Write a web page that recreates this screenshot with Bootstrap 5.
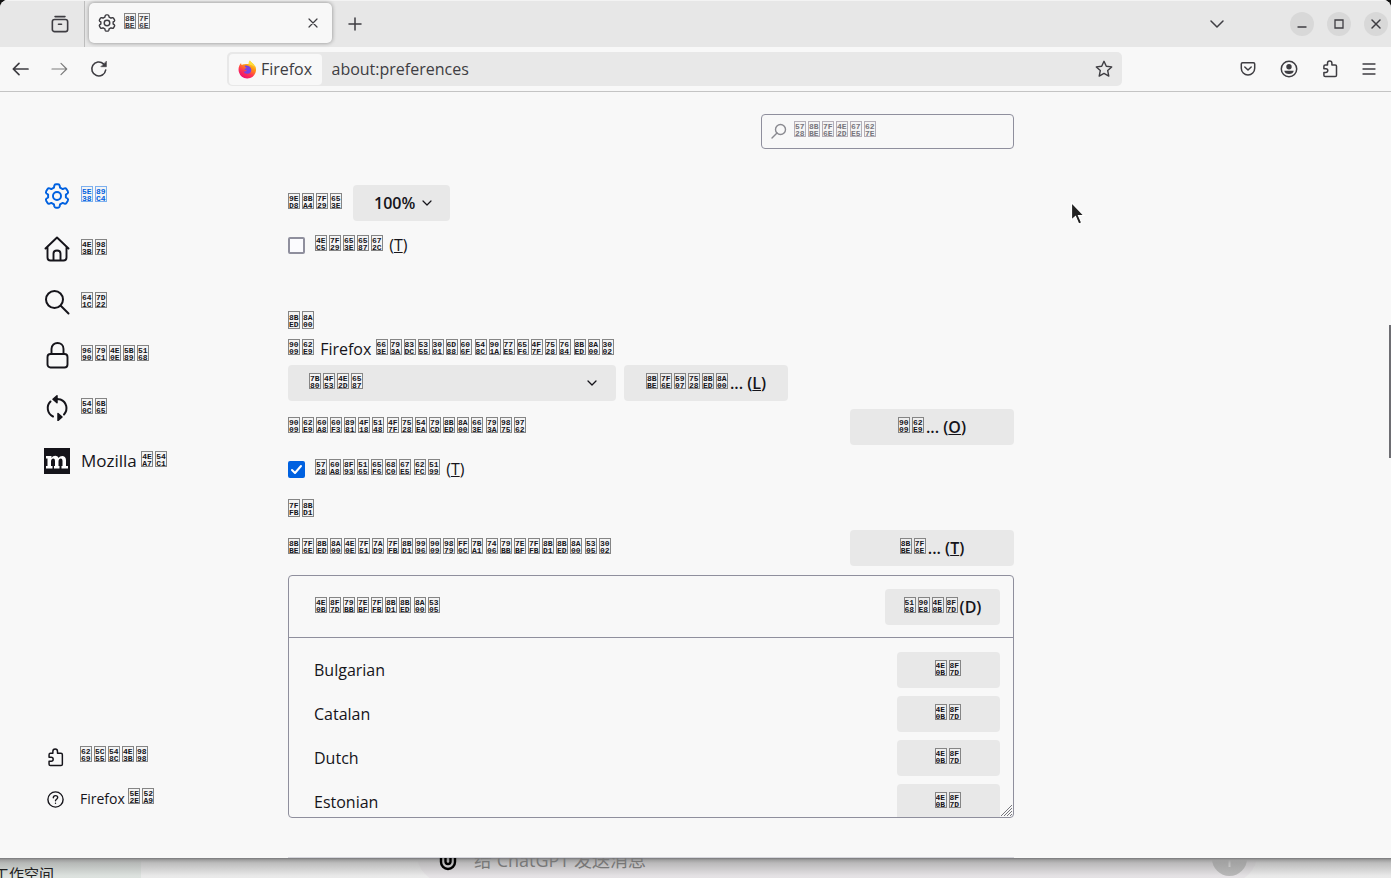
<!DOCTYPE html>
<html lang="zh-CN">
<head>
<meta charset="utf-8">
<meta name="viewport" content="width=device-width, initial-scale=1">
<title>about:preferences</title>
<link href="https://cdn.jsdelivr.net/npm/bootstrap@5.3.0/dist/css/bootstrap.min.css" rel="stylesheet">
<style>
  :root { --ink:#15141a; --chrome:#e7e7e7; --paper:#f8f8f8; --line:#8f8f9d; --accent:#0061e0; }
  body { font-family:"Open Sans","Noto Sans","Noto Sans CJK SC",sans-serif; font-size:16px; line-height:24px; color:var(--ink); background:#111; overflow:hidden; }
  svg { display:block; flex:none; }
  .ico { fill:none; stroke:currentColor; stroke-linecap:round; stroke-linejoin:round; }

  /* code point boxes */
  .hex { white-space:nowrap; }
  .cell { display:inline-block; overflow:hidden; width:12px; height:16px; margin-right:2px; padding:1px 0 0 0; border:1px solid #858585; background:#f4f4f4;
          font:bold 8px/7px "Liberation Mono",monospace; word-break:break-all; white-space:normal; text-align:left; color:inherit; }
  .cell:nth-child(7n) { margin-right:3px; }
  .blue .cell { border-color:#7db0ef; }
  .faint .cell { border-color:#b5afb8; color:#77757c; }

  .window { background:var(--paper); border-radius:8px 8px 0 0; overflow:hidden; }
  .plain { border:0; background:none; padding:0; color:#3e3d42; display:flex; align-items:center; justify-content:center; }

  .tabstrip { height:47px; background:var(--chrome); border-top:1px solid #f3f3f3; padding-right:3px; }
  .pinned { width:85px; border-right:1px solid #bdbdbd; padding-left:35px; }
  .active-tab { width:243px; height:40px; margin:0 0 2px 4px; padding:0 13px 0 9px; color:#3e3d42; background:var(--paper); border-radius:5px; box-shadow:0 0 4px rgba(0,0,0,.4); }
  .round-btn { width:24px; height:24px; border-radius:50%; background:#d8d8d8; }
  .win-btns { gap:13px; padding-left:17px; }

  .toolbar { height:45px; border-bottom:1px solid #c4c4c4; padding:0 15px 0 12px; }
  .nav-btns { gap:22px; }
  .urlbar { width:895px; height:34px; background:#e8e8e8; border-radius:5px; padding:2px 9px 2px 2px; }
  .identity { width:93px; height:31px; background:var(--paper); border-radius:4px; color:#3e3d42; }
  .urlbar input { border:0; background:none; outline:0; color:#3e3d42; padding:0 10px; min-width:0; }

  .side { width:288px; padding:77px 0 38px 44px; }
  .side a { color:var(--ink); text-decoration:none; display:flex; align-items:center; }
  .side .cat { height:53px; gap:11px; font-size:17px; }
  .side .cat.blue { color:var(--accent); }
  .side .foot { height:42px; gap:16px; font-size:14px; padding-left:3px; }

  .prefs { max-width:726px; padding-top:22px; }
  .find { width:253px; height:35px; }
  .find input { height:35px; border:1px solid var(--line); border-radius:4px; background:var(--paper); padding-left:32px; }
  .find label { left:10px; top:0; height:34px; gap:7px; color:#8a8a90; }
  .zoom-row { margin-top:36px; }
  .zoom-row label { margin-right:9px; }
  .soft { height:36px; border:0; border-radius:4px; background:#e8e8e8; color:var(--ink); font-weight:600; padding:0 17px; white-space:nowrap; }
  .soft .cell { background:#eeeeee; }
  select.soft { appearance:none; width:100%; }
  #zoom { padding:0 34px 0 21px; }
  .wide { width:164px; padding:0; }
  .get-all { width:115px; padding:0; }
  .tick { appearance:none; width:17px; height:17px; margin:0 10px 0 0; border:2px solid var(--line); border-radius:2px; background:#fbfbfe; flex:none; }
  .tick:checked { border-color:var(--accent); background:var(--accent) url("data:image/svg+xml,%3Csvg xmlns='http://www.w3.org/2000/svg' viewBox='0 0 13 13'%3E%3Cpath d='M2 7l3 3 6-7' fill='none' stroke='white' stroke-width='2' stroke-linecap='round' stroke-linejoin='round'/%3E%3C/svg%3E") center/13px no-repeat; }
  .lang-select { width:328px; }
  .lang-select label { padding-left:21px; }
  .over { pointer-events:none; }
  h2 { font-size:16px; line-height:24px; margin:0; }
  h2 .cell { height:18px; padding-top:2px; }
  .lang-head { margin-top:54px; }
  .trans-head { margin-top:18px; }
  .intro { margin-top:2px; }
  .snug { margin-top:7px; }

  .langs { height:243px; margin-top:9px; border:1px solid var(--line); border-radius:4px; overflow:hidden; }
  .langs .top { height:62px; padding:0 13px 0 26px; border-bottom:1px solid var(--line); }
  .langs td { height:44px; padding:4px 13px 4px 25px; }
  .langs td:last-child { text-align:right; }
  .langs .get { width:103px; }
  .langs table { width:100%; margin-top:10px; }
  .grip { right:0; bottom:0; }
  .next-rule { height:1px; background:#d6d6dc; margin-top:39px; }
  .thumb { right:0; top:233px; width:2px; height:133px; background:#6e6e73; }
  .pointer { left:1070px; top:109px; }

  .desk { height:20px; background:#ececec; overflow:hidden; }
  .desk .shade { inset:0; background:linear-gradient(#77777a 0,#a0a0a0 2px,rgba(150,150,150,.55) 5px,rgba(215,215,215,.1) 18px); }
  .desk .panel { left:0; top:0; width:141px; height:20px; background:#dde3df; }
  .desk .chatbar { left:417px; right:134px; top:-30px; height:54px; border-radius:27px; background:#e6e3e6; }
  .desk .work { left:-6px; top:4px; font-size:15px; color:#222; white-space:nowrap; }
  .desk .ask { left:474px; top:-10px; font-size:18px; color:#777; white-space:nowrap; }
  .desk .clip { left:439px; top:-7px; color:#000; }
  .desk .send { left:1212px; top:-17px; }
</style>
</head>
<body class="vh-100 d-flex flex-column">
<div class="window flex-grow-1 d-flex flex-column">
  <header>
    <div class="tabstrip d-flex align-items-center">
      <div class="pinned h-100 d-flex align-items-center justify-content-center">
        <button class="plain" aria-label="Firefox View"><svg class="ico" width="18" height="18" viewBox="0 0 20 20" stroke-width="1.8"><path d="M4.500 1.800h11"/><rect x="1.500" y="5" width="17" height="13.500" rx="2.500"/><path d="M8.300 10.300h3.400"/></svg></button>
      </div>
      <div class="active-tab d-flex align-items-center">
        <svg class="ico me-2" width="18" height="20" viewBox="0 0 24 24" stroke-width="1.900"><use href="#gear"/></svg>
        <span class="hex">8BBE 7F6E</span>
        <button class="plain ms-auto" aria-label="Close tab"><svg class="ico" width="12" height="12" viewBox="0 0 12 12" stroke-width="1.200"><path d="M2 2l8 8M10 2l-8 8"/></svg></button>
      </div>
      <button class="plain ms-3" aria-label="New tab"><svg class="ico" width="14" height="14" viewBox="0 0 14 14" stroke-width="1.500"><path d="M7 1v12M1 7h12"/></svg></button>
      <div class="ms-auto d-flex align-items-center">
        <button class="plain me-5" aria-label="List tabs"><svg class="ico" width="16" height="10" viewBox="0 0 16 10" stroke-width="1.500"><path d="M2 2l6 6 6-6"/></svg></button>
        <div class="win-btns d-flex">
          <button class="plain round-btn" aria-label="Minimize"><svg class="ico" width="12" height="12" viewBox="0 0 12 12" stroke-width="1.400"><path d="M2 9h8"/></svg></button>
          <button class="plain round-btn" aria-label="Maximize"><svg width="12" height="12" viewBox="0 0 12 12" fill="none" stroke="currentColor" stroke-width="1.300"><path d="M2 2h8v8H2z"/></svg></button>
          <button class="plain round-btn" aria-label="Close"><svg class="ico" width="12" height="12" viewBox="0 0 12 12" stroke-width="1.500"><path d="M2 2l8 8M10 2l-8 8"/></svg></button>
        </div>
      </div>
    </div>
    <div class="toolbar d-flex align-items-center justify-content-between">
      <div class="nav-btns d-flex align-items-center">
        <button class="plain" aria-label="Back"><svg class="ico" width="17" height="16" viewBox="0 0 17 16" stroke-width="1.700"><path d="M16 8H1.500M7 2.300L1.300 8 7 13.700"/></svg></button>
        <button class="plain text-black-50" aria-label="Forward"><svg class="ico" width="17" height="16" viewBox="0 0 17 16" stroke-width="1.200"><path d="M1 8h14.500M10 2.300L15.700 8 10 13.700"/></svg></button>
        <button class="plain" aria-label="Reload"><svg class="ico" width="18" height="18" viewBox="0 0 18 18" stroke-width="1.600"><path d="M15.700 10A7 7 0 1 1 13.500 3.800L15 5"/><path d="M16.400 1.500v5.200h-5.200z" fill="currentColor" stroke-width=".6"/></svg></button>
      </div>
      <div class="urlbar d-flex align-items-center">
        <div class="identity d-flex align-items-center justify-content-center gap-1">
          <svg width="19" height="19" viewBox="0 0 20 20"><defs><linearGradient id="fx" x1=".8" y1="0" x2=".25" y2="1"><stop offset="0" stop-color="#fff44f"/><stop offset=".35" stop-color="#ff980e"/><stop offset=".65" stop-color="#ff3750"/><stop offset="1" stop-color="#eb0878"/></linearGradient></defs><path d="M12.500.5c1 2 4 3 5.500 6 .8.300 1.600 4 .4 7A9.200 9.200 0 0 1 1 13C0 9.500.8 6 3.200 3.200c0 1 .3 1.600.8 2C5 4.500 6 4.300 7.300 4.500 8.500 4 11 4 11.500 4.600 11 3 11.500 1.500 12.500.5z" fill="url(#fx)"/><path d="M7 6c2.500-1 6.500.500 7 4a4.300 4.300 0 0 1-8.300 1.800c1.400.8 2.900.3 3.900-.4-.6-.7-2.400-.6-2.900-1.700.6-.8 1.800-.7 2.500-1.200C8.200 7.600 7 7 7 6z" fill="#7542e5"/><path d="M12.500.5c1 2 4 3 5 6.500-1.500-1.700-3.500-1-6-2.400C11 3 11.500 1.500 12.500.5z" fill="#ffde3a"/></svg>
          <span>Firefox</span>
        </div>
        <input class="flex-grow-1" type="text" aria-label="Address" value="about:preferences">
        <button class="plain" aria-label="Bookmark"><svg class="ico" width="18" height="18" viewBox="0 0 18 18" stroke-width="1.400"><path d="M9 1.300l2.300 5 5.400.6-4 3.700 1.100 5.500L9 13.400l-4.800 2.700 1.100-5.500-4-3.700 5.400-.6z"/></svg></button>
      </div>
      <div class="d-flex align-items-center gap-4">
        <button class="plain" aria-label="Pocket"><svg class="ico" width="16" height="16" viewBox="0 0 16 16" stroke-width="1.500"><path d="M2.500 1.700h11c.6 0 1.200.5 1.200 1.200v4.300a6.700 6.700 0 0 1-13.400 0V2.900c0-.7.6-1.200 1.200-1.200zM4.800 6L8 9l3.200-3"/></svg></button>
        <button class="plain" aria-label="Account"><svg width="18" height="18" viewBox="0 0 18 18"><circle cx="9" cy="9" r="7.700" fill="none" stroke="currentColor" stroke-width="1.500"/><circle cx="9" cy="6.700" r="2.700" fill="currentColor"/><path d="M4.300 10.700h9.400c0 2-2.200 3.300-4.700 3.300s-4.700-1.300-4.700-3.300z" fill="currentColor"/></svg></button>
        <button class="plain" aria-label="Extensions"><svg class="ico" width="16" height="18" viewBox="0 0 16 18" stroke-width="1.500"><use href="#puzzle"/></svg></button>
        <button class="plain" aria-label="Menu"><svg class="ico" width="14" height="14" viewBox="0 0 14 14" stroke-width="1.300"><path d="M1 2h12M1 7h12M1 12h12"/></svg></button>
      </div>
    </div>
  </header>

  <div class="d-flex flex-grow-1 position-relative">
    <nav class="side d-flex flex-column justify-content-between flex-shrink-0">
      <div>
        <a class="cat blue" href="#general"><svg class="ico" width="26" height="26" viewBox="0 0 24 24" stroke-width="1.800"><use href="#gear"/></svg><span class="hex">5E38 89C4</span></a>
        <a class="cat" href="#home"><svg class="ico" width="26" height="26" viewBox="0 0 26 26" stroke-width="1.900"><path d="M1.500 12.500L13 1.500l11.500 11M3.500 11v10.500c0 1.500 1 3 3 3h13c2 0 3-1.500 3-3V11M9.500 24v-6.500c0-2 1.500-3 3.500-3s3.500 1 3.500 3V24"/></svg><span class="hex">4E3B 9875</span></a>
        <a class="cat" href="#search"><svg class="ico" width="26" height="26" viewBox="0 0 26 26" stroke-width="2"><circle cx="10.500" cy="10.500" r="8.500"/><path d="M17 17l7.500 7.500"/></svg><span class="hex">641C 7D22</span></a>
        <a class="cat" href="#privacy"><svg class="ico" width="26" height="28" viewBox="0 0 26 28" stroke-width="1.900"><rect x="3.500" y="13" width="20" height="13.500" rx="3"/><path d="M7.500 13V8c0-8 12-8 12 0v5"/></svg><span class="hex">9690 79C1 4E0E 5B89 5168</span></a>
        <a class="cat" href="#sync"><svg class="ico" width="26" height="26" viewBox="0 0 26 26" stroke-width="2"><path d="M6.500 6.500a9.300 9.300 0 0 0 2.500 15M20 19.500a9.300 9.300 0 0 0-3.500-15L13 4"/><path d="M13 .8v7L9 4.300zM14 18.500v7l4-3.500z" fill="currentColor" stroke-width="1.500"/></svg><span class="hex">540C 6B65</span></a>
        <a class="cat" href="#mozilla"><svg width="26" height="26" viewBox="0 0 26 26"><path d="M0 0h26v26H0z" fill="#15141a"/><path d="M2 8h5.500v2C9 7.300 13.300 7 14.600 10 16 7 22 6.800 22 12v6h2v2.500h-6.500V18h1v-5c0-4-4-3-4 .5V18h1v2.500H10V18h1v-5c0-4-4-3-4 .5V18h1.500v2.500H2V18h1.500v-7.500H2z" fill="#fff"/></svg><span>Mozilla <span class="hex">4EA7 54C1</span></span></a>
      </div>
      <div>
        <a class="foot" href="#addons"><svg class="ico" width="17" height="19" viewBox="0 0 16 18" stroke-width="1.400"><use href="#puzzle"/></svg><span class="hex">6269 5C55 548C 4E3B 9898</span></a>
        <a class="foot" href="#help"><svg class="ico" width="17" height="17" viewBox="0 0 17 17" stroke-width="1.400"><circle cx="8.500" cy="8.500" r="7.600"/><path d="M6.300 6.800c0-3 4.400-2.800 4.400-.2 0 1.600-2.200 1.600-2.200 3.200M8.500 12.200v.1"/></svg><span>Firefox <span class="hex">5E2E 52A9</span></span></a>
      </div>
    </nav>

    <main class="prefs flex-grow-1">
      <div class="find ms-auto position-relative">
        <input id="find" class="w-100" type="text">
        <label for="find" class="position-absolute d-flex align-items-center faint"><svg class="ico" width="16" height="16" viewBox="0 0 16 16" stroke-width="1.400"><circle cx="9.500" cy="6.500" r="5"/><path d="M6 10l-5 5"/></svg><span class="hex">5728 8BBE 7F6E 4E2D 67E5 627E</span></label>
      </div>
      <div class="zoom-row d-flex align-items-center">
        <label for="zoom" class="hex">9ED8 8BA4 7F29 653E</label>
        <div class="position-relative">
          <select id="zoom" class="soft"><option>100%</option></select>
          <svg class="ico over position-absolute top-50 end-0 translate-middle-y me-3" width="14" height="8" viewBox="0 0 14 8" stroke-width="1.200"><path d="M3 2l4 4 4-4"/></svg>
        </div>
      </div>
      <div class="d-flex align-items-center mt-2 pt-1"><input class="tick" type="checkbox" id="textonly"><label for="textonly"><span class="hex">4EC5 7F29 653E 6587 672C</span> (<u>T</u>)</label></div>

      <h2 class="lang-head"><span class="hex">8BED 8A00</span></h2>
      <div class="intro"><span class="hex">9009 62E9</span> Firefox <span class="hex">663E 793A 83DC 5355 3001 6D88 606F 548C 901A 77E5 65F6 4F7F 7528 7684 8BED 8A00 3002</span></div>
      <div class="d-flex mt-1 gap-2">
        <div class="lang-select position-relative">
          <select id="lang" class="soft"><option></option></select>
          <label for="lang" class="over hex position-absolute top-50 start-0 translate-middle-y">7B80 4F53 4E2D 6587</label>
          <svg class="ico over position-absolute top-50 end-0 translate-middle-y me-3" width="16" height="8" viewBox="0 0 16 8" stroke-width="1.300"><path d="M4 2l4 4 4-4"/></svg>
        </div>
        <button class="soft wide"><span class="hex">8BBE 7F6E 5907 7528 8BED 8A00</span>... (<u>L</u>)</button>
      </div>
      <div class="d-flex align-items-center justify-content-between mt-2"><span class="hex">9009 62E9 60A8 60F3 8981 4F18 5148 4F7F 7528 54EA 79CD 8BED 8A00 663E 793A 9875 9762</span><button class="soft wide"><span class="hex">9009 62E9</span>... (<u>O</u>)</button></div>
      <div class="d-flex align-items-center mt-2 pt-1"><input class="tick" type="checkbox" id="spell" checked><label for="spell"><span class="hex">5728 60A8 8F93 5165 65F6 68C0 67E5 62FC 5199</span> (<u>T</u>)</label></div>
      <h2 class="trans-head"><span class="hex">7FFB 8BD1</span></h2>
      <div class="snug d-flex align-items-center justify-content-between"><span class="hex">8BBE 7F6E 8BED 8A00 4E0E 7F51 7AD9 7FFB 8BD1 9996 9009 9879 FF0C 7BA1 7406 79BB 7EBF 7FFB 8BD1 8BED 8A00 5305 3002</span><button class="soft wide"><span class="hex">8BBE 7F6E</span>... (<u>T</u>)</button></div>
      <section class="langs position-relative">
        <div class="top d-flex align-items-center justify-content-between"><span class="hex">4E0B 8F7D 79BB 7EBF 7FFB 8BD1 8BED 8A00 5305</span><button class="soft get-all"><span class="hex">5168 90E8 4E0B 8F7D</span>(D)</button></div>
        <table>
          <tr><td>Bulgarian</td><td><button class="soft get"><span class="hex">4E0B 8F7D</span></button></td></tr>
          <tr><td>Catalan</td><td><button class="soft get"><span class="hex">4E0B 8F7D</span></button></td></tr>
          <tr><td>Dutch</td><td><button class="soft get"><span class="hex">4E0B 8F7D</span></button></td></tr>
          <tr><td>Estonian</td><td><button class="soft get"><span class="hex">4E0B 8F7D</span></button></td></tr>
        </table>
        <svg class="grip position-absolute" width="13" height="13" viewBox="0 0 13 13" stroke="#77777d" stroke-width="1"><path d="M1 12L12 1M4 12l8-8M7 12l5-5M10 12l2-2"/></svg>
      </section>
      <div class="next-rule"></div>
    </main>
    <div class="thumb position-absolute"></div>
    <svg class="pointer position-absolute" width="18" height="27" viewBox="0 0 18 27"><path d="M1.500 1.500v17.500l4-3.500 3.200 7.500 3-1.300-3.200-7.200h5.500z" fill="#222" stroke="#fff" stroke-width="1.200"/></svg>
  </div>
</div>

<footer class="desk position-relative flex-shrink-0">
  <div class="panel position-absolute"></div>
  <div class="chatbar position-absolute"></div>
  <svg class="send position-absolute" width="35" height="35" viewBox="0 0 35 35"><circle cx="17.500" cy="17.500" r="17.500" fill="#b4b4b4"/><path d="M17.500 8v18M10 15l7.500-7.500L25 15" stroke="#e4e4e4" stroke-width="2" fill="none"/></svg>
  <div class="shade position-absolute"></div>
  <span class="work position-absolute">工作空间</span>
  <svg class="clip ico position-absolute" width="18" height="20" viewBox="0 0 18 20" stroke-width="2.400"><path d="M2 0v11a7 7 0 0 0 14 0V0M6.500 0v10.500a2.500 2.500 0 0 0 5 0V0"/></svg>
  <span class="ask position-absolute">给 ChatGPT 发送消息</span>
</footer>

<svg width="0" height="0" class="position-absolute">
  <defs>
    <g id="gear"><path d="M9.500 2.500q.3-1.300 1.500-1.300h2q1.200 0 1.500 1.300l.3 1.700 2.500 1.400 1.500-.6q1.300-.4 1.900.6l1.300 2.100q.6 1.200-.3 2l-1.500.9v2.800l1.500.9q.9.800.3 2l-1.300 2.100q-.6 1-1.900.6l-1.500-.6-2.500 1.400-.3 1.700q-.3 1.300-1.500 1.300h-2q-1.200 0-1.500-1.300l-.3-1.700-2.500-1.400-1.500.6q-1.300.4-1.900-.6L2 16.300q-.6-1.200.3-2l1.500-.9v-2.800l-1.500-.9q-.9-.8-.3-2l1.300-2.100q.6-1 1.900-.6l1.500.6 2.500-1.400z"/><circle cx="12" cy="12" r="3.700"/></g>
    <g id="puzzle"><path d="M5.500 5V3.200a2.200 2.200 0 0 1 4.400 0V5h3.300c.8 0 1.300.5 1.300 1.300v9c0 .8-.5 1.300-1.300 1.300h-10c-.8 0-1.300-.5-1.300-1.300v-2.800h2a1.900 1.900 0 0 0 0-3.800h-2V6.300C1.900 5.500 2.400 5 3.200 5z"/></g>
  </defs>
</svg>
<script src="https://cdn.jsdelivr.net/npm/bootstrap@5.3.0/dist/js/bootstrap.bundle.min.js"></script>
<script>
  // Give every code point its own little box
  document.querySelectorAll('.hex').forEach(el => {
    const codes = el.textContent.trim().split(' ');
    el.replaceChildren(...codes.map(code => {
      const box = document.createElement('span');
      box.className = 'cell';
      box.textContent = code;
      return box;
    }));
  });
</script>
</body>
</html>
